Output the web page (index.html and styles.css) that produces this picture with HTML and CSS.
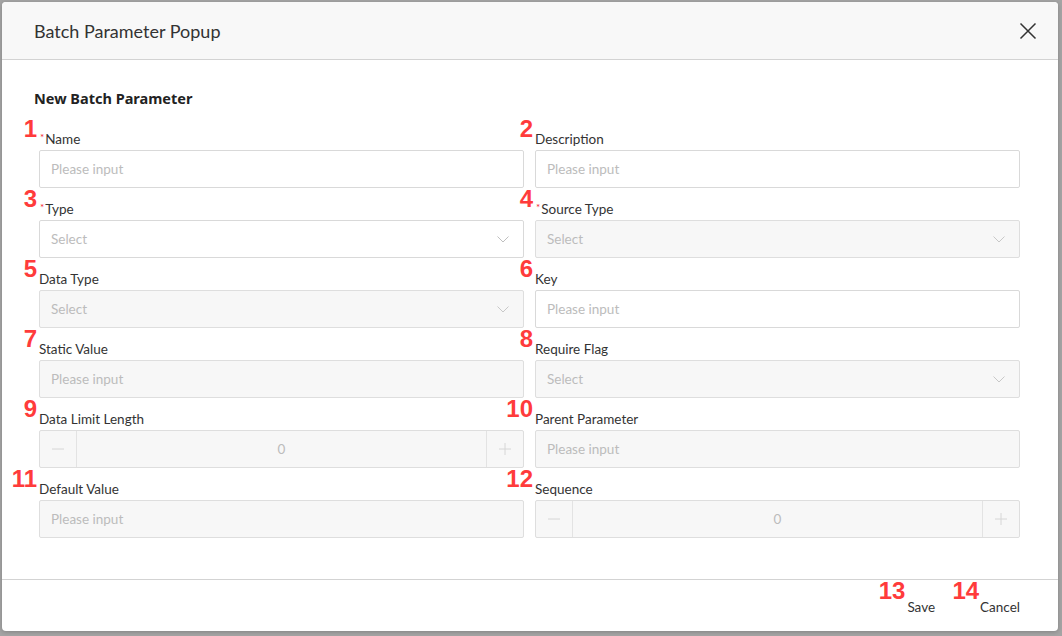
FILE: index.html
```html
<!DOCTYPE html>
<html>
<head>
<meta charset="utf-8">
<title>Batch Parameter Popup</title>
<link rel="stylesheet" href="styles.css">
</head>
<body>
<div class="modal">
  <div class="modal-header">
    <div class="modal-title">Batch Parameter Popup</div>
    <button class="close-btn" aria-label="Close">
      <svg width="18" height="18" viewBox="0 0 18 18"><path d="M1.5 1.5 L16.5 16.5 M16.5 1.5 L1.5 16.5" stroke="#333" stroke-width="1.5" fill="none"/></svg>
    </button>
  </div>
  <div class="modal-body">
    <div class="section-title">New Batch Parameter</div>
    <div class="form-grid">
      <div class="field">
        <span class="tag">1</span>
        <label class="label"><span class="req">*</span>Name</label>
        <div class="input"><span class="ph">Please input</span></div>
      </div>
      <div class="field">
        <span class="tag">2</span>
        <label class="label">Description</label>
        <div class="input"><span class="ph">Please input</span></div>
      </div>
      <div class="field">
        <span class="tag">3</span>
        <label class="label"><span class="req">*</span>Type</label>
        <div class="input select"><span class="ph">Select</span>
          <svg class="chev" width="12" height="7" viewBox="0 0 12 7"><path d="M0.5 0.5 L6 6 L11.5 0.5" stroke="#bfbfbf" stroke-width="1" fill="none"/></svg></div>
      </div>
      <div class="field">
        <span class="tag">4</span>
        <label class="label"><span class="req">*</span>Source Type</label>
        <div class="input select disabled"><span class="ph">Select</span>
          <svg class="chev" width="12" height="7" viewBox="0 0 12 7"><path d="M0.5 0.5 L6 6 L11.5 0.5" stroke="#c8c8c8" stroke-width="1" fill="none"/></svg></div>
      </div>
      <div class="field">
        <span class="tag">5</span>
        <label class="label">Data Type</label>
        <div class="input select disabled"><span class="ph">Select</span>
          <svg class="chev" width="12" height="7" viewBox="0 0 12 7"><path d="M0.5 0.5 L6 6 L11.5 0.5" stroke="#c8c8c8" stroke-width="1" fill="none"/></svg></div>
      </div>
      <div class="field">
        <span class="tag">6</span>
        <label class="label">Key</label>
        <div class="input"><span class="ph">Please input</span></div>
      </div>
      <div class="field">
        <span class="tag">7</span>
        <label class="label">Static Value</label>
        <div class="input disabled"><span class="ph">Please input</span></div>
      </div>
      <div class="field">
        <span class="tag">8</span>
        <label class="label">Require Flag</label>
        <div class="input select disabled"><span class="ph">Select</span>
          <svg class="chev" width="12" height="7" viewBox="0 0 12 7"><path d="M0.5 0.5 L6 6 L11.5 0.5" stroke="#c8c8c8" stroke-width="1" fill="none"/></svg></div>
      </div>
      <div class="field">
        <span class="tag">9</span>
        <label class="label">Data Limit Length</label>
        <div class="input number disabled">
          <span class="step minus"><svg width="12" height="12" viewBox="0 0 12 12"><path d="M0 6 H12" stroke="#d6d6d6" stroke-width="1"/></svg></span>
          <span class="num-val">0</span>
          <span class="step plus"><svg width="12" height="12" viewBox="0 0 12 12"><path d="M0 6 H12 M6 0 V12" stroke="#d6d6d6" stroke-width="1"/></svg></span>
        </div>
      </div>
      <div class="field">
        <span class="tag">10</span>
        <label class="label">Parent Parameter</label>
        <div class="input disabled"><span class="ph">Please input</span></div>
      </div>
      <div class="field">
        <span class="tag">11</span>
        <label class="label">Default Value</label>
        <div class="input disabled"><span class="ph">Please input</span></div>
      </div>
      <div class="field">
        <span class="tag">12</span>
        <label class="label">Sequence</label>
        <div class="input number disabled">
          <span class="step minus"><svg width="12" height="12" viewBox="0 0 12 12"><path d="M0 6 H12" stroke="#d6d6d6" stroke-width="1"/></svg></span>
          <span class="num-val">0</span>
          <span class="step plus"><svg width="12" height="12" viewBox="0 0 12 12"><path d="M0 6 H12 M6 0 V12" stroke="#d6d6d6" stroke-width="1"/></svg></span>
        </div>
      </div>
    </div>
  </div>
  <div class="modal-footer">
    <button class="btn"><span class="tag tag-save">13</span>Save</button>
    <button class="btn"><span class="tag tag-cancel">14</span>Cancel</button>
  </div>
</div>
</body>
</html>
```
FILE: styles.css
```css
* { box-sizing: border-box; }
html, body { margin: 0; padding: 0; }
body {
  width: 1062px;
  height: 636px;
  background: #a4a4a4;
  font-family: Lato, "Noto Sans", sans-serif;
  color: #333;
  overflow: hidden;
  padding: 2px 4px 0 2px;
}
.modal {
  height: 629px;
  background: #fff;
  border-radius: 4px;
  display: flex;
  flex-direction: column;
  overflow: hidden;
  box-shadow: 0 1px 4px rgba(0,0,0,0.2);
}
.modal-header {
  height: 58px;
  flex: none;
  background: #f8f8f8;
  border-bottom: 1px solid #d3d3d3;
  display: flex;
  align-items: center;
  justify-content: space-between;
  padding: 0 21px 0 32px;
}
.modal-title {
  font-size: 18px;
  color: #333;
}
.close-btn {
  border: 0;
  background: transparent;
  padding: 0;
  width: 18px;
  height: 18px;
  display: flex;
  cursor: pointer;
}
.modal-body {
  flex: 1;
  padding: 28px 33px 0 32px;
}
.section-title {
  font-family: "Noto Sans", Lato, sans-serif;
  font-size: 14.5px;
  font-weight: 700;
  line-height: 20px;
  color: #222;
}
.form-grid {
  margin-top: 20px;
  padding: 0 5px;
  display: grid;
  grid-template-columns: 1fr 1fr;
  column-gap: 11px;
  row-gap: 10px;
}
.field {
  position: relative;
  display: flex;
  flex-direction: column;
}
.label {
  font-size: 13.5px;
  line-height: 22px;
  height: 22px;
  color: #333;
}
.req {
  position: relative;
  top: -3px;
  color: #f5222d;
  font-size: 10px;
  line-height: 0;
  margin-left: 1px;
  margin-right: 1px;
}
.tag {
  position: absolute;
  right: calc(100% + 2px);
  top: -11px;
  font-family: "Liberation Sans", Arial, sans-serif;
  font-weight: 700;
  font-size: 24px;
  line-height: 24px;
  color: #ff3b3b;
}
.input {
  height: 38px;
  border: 1px solid #d9d9d9;
  border-radius: 2px;
  background: #fff;
  display: flex;
  align-items: center;
  padding: 0 14px 0 11px;
  font-size: 13.5px;
}
.input.disabled {
  background: #f7f7f7;
  border-color: #dedede;
}
.ph { color: #bcbcbc; flex: 1; }
.select .chev { flex: none; }
.number { padding: 0; }
.step {
  width: 37px;
  height: 100%;
  display: flex;
  align-items: center;
  justify-content: center;
  flex: none;
}
.minus { border-right: 1px solid #e3e3e3; }
.plus { border-left: 1px solid #e3e3e3; }
.num-val {
  flex: 1;
  text-align: center;
  color: #bcbcbc;
}
.modal-footer {
  height: 52px;
  flex: none;
  border-top: 1px solid #d3d3d3;
  display: flex;
  justify-content: flex-end;
  align-items: flex-start;
  gap: 45px;
  padding: 18px 38px 0 0;
}
.btn {
  position: relative;
  border: 0;
  background: transparent;
  padding: 0;
  font-family: Lato, "Noto Sans", sans-serif;
  font-size: 13.5px;
  line-height: 18px;
  color: #333;
}
.tag-save {
  top: -19px;
  right: calc(100% + 2px);
}
.tag-cancel {
  top: -19px;
  right: calc(100% + 1px);
}
```
